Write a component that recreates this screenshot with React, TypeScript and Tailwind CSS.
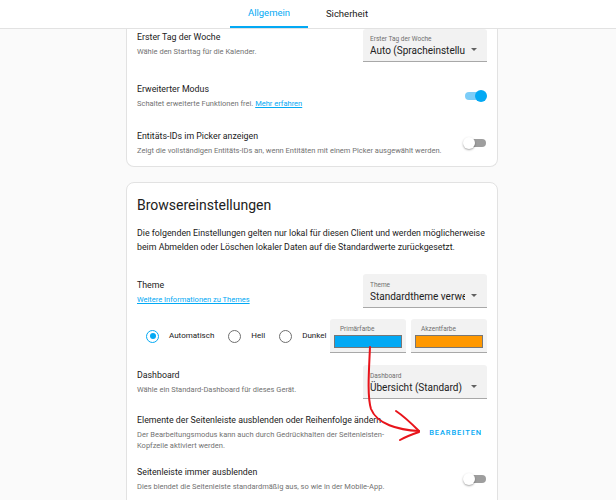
import { useState } from "react";

const Toggle = ({ on }: { on: boolean }) => {
    return (
        <div className="relative w-[24px] h-[14px] flex items-center shrink-0">
            <div className={`w-[21px] h-[8px] rounded-full ml-[2px] ${on ? "bg-[#7ccdf8]" : "bg-[#9e9e9e]"}`} />
            <div
                className={`absolute top-[1px] w-[12px] h-[12px] rounded-full ${
                    on ? "right-0 bg-[#03a9f4]" : "left-0 bg-white shadow-[0_1px_2px_rgba(0,0,0,0.35)]"
                }`}
            />
        </div>
    );
};

const Select = ({ label, value, h = "h-[34px]" }: { label: string; value: string; h?: string }) => {
    return (
        <div className={`w-[124px] ${h} bg-[#f2f2f2] border-b border-[#a8a8a8] rounded-t-[3px] flex items-end pb-[4px] pl-[7px] pr-[10px] shrink-0`}>
            <div className="flex-1 min-w-0 overflow-hidden">
                <div className="text-[6.5px] leading-[9px] text-[#6f6f6f] whitespace-nowrap">{label}</div>
                <div className="text-[10px] leading-[13px] text-[#212121] whitespace-nowrap overflow-hidden">{value}</div>
            </div>
            <div className="mb-[6px] ml-[6px] w-0 h-0 border-l-[3px] border-r-[3px] border-t-[3.5px] border-l-transparent border-r-transparent border-t-[#616161]" />
        </div>
    );
};

const Radio = ({ checked, label }: { checked: boolean; label: string }) => {
    return (
        <div className="flex items-center">
            <div
                className={`w-[13px] h-[13px] rounded-full border-[1.5px] flex items-center justify-center ${
                    checked ? "border-[#03a9f4]" : "border-[#6f6f6f]"
                }`}
            >
                {checked && <div className="w-[6px] h-[6px] rounded-full bg-[#03a9f4]" />}
            </div>
            <span className="ml-[10px] text-[8px] text-[#212121]">{label}</span>
        </div>
    );
};

const ColorPicker = ({ label, color }: { label: string; color: string }) => {
    return (
        <div className="w-[76px] h-[34px] bg-[#f2f2f2] border-b border-[#a8a8a8] rounded-t-[3px] px-[4px] pt-[6px]">
            <div className="text-[6.5px] leading-[9px] text-[#6f6f6f] pl-[6px]">{label}</div>
            <div className="mt-[1px] h-[13px] border border-[#777]" style={{ background: color }} />
        </div>
    );
};

const Title = ({ children }: { children: React.ReactNode }) => (
    <div className="text-[8.8px] leading-[12px] text-[#212121]">{children}</div>
);

const Desc = ({ children }: { children: React.ReactNode }) => (
    <div className="mt-[3px] text-[7.5px] leading-[11px] text-[#727272]">{children}</div>
);

export default function App() {
    const [tab] = useState("Allgemein");

    return (
        <div className="relative w-[616px] h-[500px] overflow-hidden bg-[#fafafa] font-['Roboto',sans-serif]">
            {/* tabs */}
            <div className="h-[29px] bg-white border-b border-[#e2e2e2] flex justify-center">
                {["Allgemein", "Sicherheit"].map((t) => (
                    <div
                        key={t}
                        className={`w-[78px] flex items-center justify-center text-[9.5px] ${
                            t === tab ? "text-[#03a9f4] border-b-2 border-[#03a9f4]" : "text-[#212121]"
                        }`}
                    >
                        {t}
                    </div>
                ))}
            </div>

            {/* card 1 */}
            <div className="ml-[126px] w-[372px] bg-white border border-t-0 border-[#e2e2e2] rounded-b-[8px] px-[10px] pb-[10px]">
                <div className="flex justify-between items-start">
                    <div className="pt-[2px]">
                        <Title>Erster Tag der Woche</Title>
                        <Desc>Wähle den Starttag für die Kalender.</Desc>
                    </div>
                    <Select label="Erster Tag der Woche" value="Auto (Spracheinstellung)" h="h-[33px]" />
                </div>
                <div className="mt-[21px] flex justify-between items-center">
                    <div>
                        <Title>Erweiterter Modus</Title>
                        <Desc>
                            Schaltet erweiterte Funktionen frei.{" "}
                            <span className="text-[#03a9f4] underline">Mehr erfahren</span>
                        </Desc>
                    </div>
                    <Toggle on={true} />
                </div>
                <div className="mt-[21px] flex justify-between items-center">
                    <div>
                        <Title>Entitäts-IDs im Picker anzeigen</Title>
                        <Desc>Zeigt die vollständigen Entitäts-IDs an, wenn Entitäten mit einem Picker ausgewählt werden.</Desc>
                    </div>
                    <Toggle on={false} />
                </div>
            </div>

            {/* card 2 */}
            <div className="mt-[15px] ml-[126px] w-[372px] bg-white border border-[#e2e2e2] rounded-[8px] px-[10px] pt-[12px] pb-[20px]">
                <div className="text-[14px] leading-[20px] text-[#212121]">Browsereinstellungen</div>
                <div className="mt-[11px] text-[8.8px] leading-[14px] text-[#212121]">
                    Die folgenden Einstellungen gelten nur lokal für diesen Client und werden möglicherweise
                    <br />
                    beim Abmelden oder Löschen lokaler Daten auf die Standardwerte zurückgesetzt.
                </div>

                <div className="mt-[20px] flex justify-between items-start">
                    <div className="pt-[5px]">
                        <Title>Theme</Title>
                        <Desc>
                            <span className="text-[#03a9f4] underline">Weitere Informationen zu Themes</span>
                        </Desc>
                    </div>
                    <Select label="Theme" value="Standardtheme verwenden" />
                </div>

                <div className="mt-[11px] flex items-center">
                    <div className="flex-1 min-w-0 flex items-center gap-[14px] pl-[9px]">
                        <Radio checked={true} label="Automatisch" />
                        <Radio checked={false} label="Hell" />
                        <Radio checked={false} label="Dunkel" />
                    </div>
                    <div className="flex gap-[5px] shrink-0">
                        <ColorPicker label="Primärfarbe" color="#03a9f4" />
                        <ColorPicker label="Akzentfarbe" color="#ff9800" />
                    </div>
                </div>

                <div className="mt-[12px] flex justify-between items-start">
                    <div className="pt-[4px]">
                        <Title>Dashboard</Title>
                        <Desc>Wähle ein Standard-Dashboard für dieses Gerät.</Desc>
                    </div>
                    <Select label="Dashboard" value="Übersicht (Standard)" />
                </div>

                <div className="mt-[15px] flex justify-between items-center">
                    <div>
                        <Title>Elemente der Seitenleiste ausblenden oder Reihenfolge ändern</Title>
                        <Desc>
                            Der Bearbeitungsmodus kann auch durch Gedrückhalten der Seitenleisten-
                            <br />
                            Kopfzeile aktiviert werden.
                        </Desc>
                    </div>
                    <button className="mr-[5px] text-[7.5px] font-medium tracking-[0.9px] text-[#03a9f4]">BEARBEITEN</button>
                </div>

                <div className="mt-[15px] flex justify-between items-center">
                    <div>
                        <Title>Seitenleiste immer ausblenden</Title>
                        <Desc>Dies blendet die Seitenleiste standardmäßig aus, so wie in der Mobile-App.</Desc>
                    </div>
                    <Toggle on={false} />
                </div>
            </div>

            {/* red annotation arrow */}
            <svg className="absolute top-0 left-0 pointer-events-none" width="616" height="500" viewBox="0 0 616 500">
                <g fill="none" stroke="#e8141b" strokeWidth="2" strokeLinecap="round">
                    <path d="M370 347 C369 370 367 396 371 409 C377 424 398 430 419 431" />
                    <path d="M396 411 C405 417 412 424 419 431" />
                    <path d="M400 440 C407 436 413 434 419 432" />
                </g>
            </svg>
        </div>
    );
}
